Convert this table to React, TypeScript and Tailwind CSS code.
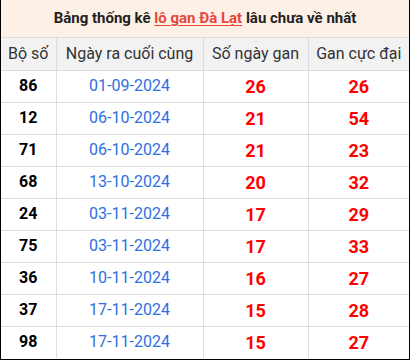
const rows: [string, string, number, number][] = [
  ['86', '01-09-2024', 26, 26],
  ['12', '06-10-2024', 21, 54],
  ['71', '06-10-2024', 21, 23],
  ['68', '13-10-2024', 20, 32],
  ['24', '03-11-2024', 17, 29],
  ['75', '03-11-2024', 17, 33],
  ['36', '10-11-2024', 16, 27],
  ['37', '17-11-2024', 15, 28],
  ['98', '17-11-2024', 15, 27],
]

export default function App() {
  return (
    <div className="w-[410px] h-[360px] bg-white font-['Roboto',sans-serif]">
      <div className="border-x border-b border-black h-[360px] flex flex-col">
        <div className="h-[38px] bg-[#fdf1e7] border-b border-[#ddd] flex items-center justify-center text-[15px] font-bold text-[#222]">
          Bảng thống kê&nbsp;<span className="text-[#e8473b] underline underline-offset-2">lô gan Đà Lạt</span>&nbsp;lâu chưa về nhất
        </div>
        <table className="w-full border-collapse table-fixed">
          <colgroup>
            <col className="w-[55px]" />
            <col className="w-[147px]" />
            <col className="w-[105px]" />
            <col />
          </colgroup>
          <thead>
            <tr className="h-[32px] bg-[#f2f2f2] text-[16px] text-[#333]">
              <th className="font-normal border-r border-b border-[#ddd]">Bộ số</th>
              <th className="font-normal border-r border-b border-[#ddd]">Ngày ra cuối cùng</th>
              <th className="font-normal border-r border-b border-[#ddd]">Số ngày gan</th>
              <th className="font-normal border-b border-[#ddd]">Gan cực đại</th>
            </tr>
          </thead>
          <tbody>
            {rows.map(([n, d, g, m], i) => (
              <tr key={n + d} className="h-[32px] text-center">
                <td className={`text-[16px] font-bold text-black border-r border-[#ddd] ${i < rows.length - 1 ? 'border-b' : ''}`}>{n}</td>
                <td className={`text-[16px] text-[#2e6fde] border-r border-[#ddd] ${i < rows.length - 1 ? 'border-b' : ''}`}>{d}</td>
                <td className={`text-[18px] font-bold text-[#ff0000] border-r border-[#ddd] ${i < rows.length - 1 ? 'border-b' : ''}`}>{g}</td>
                <td className={`text-[18px] font-bold text-[#ff0000] border-[#ddd] ${i < rows.length - 1 ? 'border-b' : ''}`}>{m}</td>
              </tr>
            ))}
          </tbody>
        </table>
      </div>
    </div>
  )
}
